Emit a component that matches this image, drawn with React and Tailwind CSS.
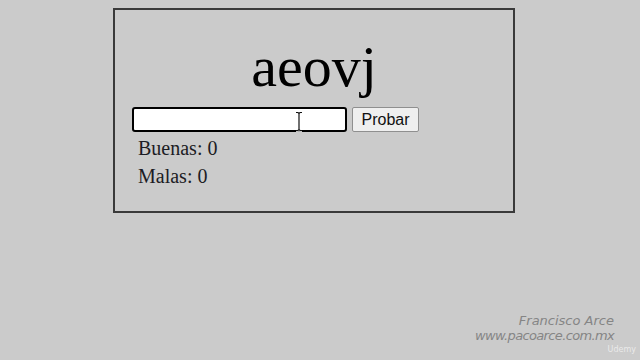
import React from "react";

export default function App() {
  return (
    <div className="relative w-[640px] h-[360px] bg-[#cbcbcb] flex flex-col overflow-hidden">
      <div className="pt-[8px] pl-[113px]">
        <div className="w-[402px] h-[205px] border-2 border-[#3a3a3a] flex flex-col">
          <div
            className="pt-[28px] text-center text-[58px] leading-[58px] text-black"
            style={{ fontFamily: '"Liberation Serif", "Times New Roman", serif' }}
          >
            aeovj
          </div>
          <div className="mt-[11px] pl-[17px] flex items-center">
            <div className="relative">
              <div className="w-[215px] h-[25px] border-2 border-black rounded-[3px] bg-white" />
              <svg
                className="absolute left-[163px] top-[4px]"
                width="8"
                height="21"
                viewBox="0 0 8 21"
              >
                <path
                  d="M1 1.5 H3 L4 2.5 L5 1.5 H7 M4 2.5 V18.5 M1 19.5 H3 L4 18.5 L5 19.5 H7"
                  stroke="#ffffff"
                  strokeWidth="2.6"
                  fill="none"
                />
                <path
                  d="M1 1.5 H3 L4 2.5 L5 1.5 H7 M4 2.5 V18.5 M1 19.5 H3 L4 18.5 L5 19.5 H7"
                  stroke="#111111"
                  strokeWidth="1.2"
                  fill="none"
                />
              </svg>
            </div>
            <button
              className="ml-[5px] w-[67px] h-[25px] border border-[#8f8f8f] rounded-[2px] bg-[#efefef] text-[16px] leading-none text-[#111] flex items-center justify-center"
              style={{ fontFamily: '"Liberation Sans", Arial, sans-serif' }}
            >
              Probar
            </button>
          </div>
          <div
            className="mt-[3px] pl-[23px] text-[20px] leading-[27.5px] text-[#1c1c24]"
            style={{ fontFamily: '"Liberation Serif", "Times New Roman", serif' }}
          >
            <div>Buenas: 0</div>
            <div>Malas: 0</div>
          </div>
        </div>
      </div>
      <div
        className="mt-auto pb-[17px] pr-[26px] text-right italic text-[#858585] text-[13px] leading-[15px]"
        style={{ fontFamily: '"DejaVu Sans", Verdana, sans-serif' }}
      >
        <div>Francisco Arce</div>
        <div className="tracking-[-0.65px]">www.pacoarce.com.mx</div>
      </div>
      <div
        className="absolute right-[4px] bottom-[6px] text-[8px] leading-none text-white opacity-60"
        style={{ fontFamily: '"DejaVu Sans", sans-serif' }}
      >
        Udemy
      </div>
    </div>
  );
}
